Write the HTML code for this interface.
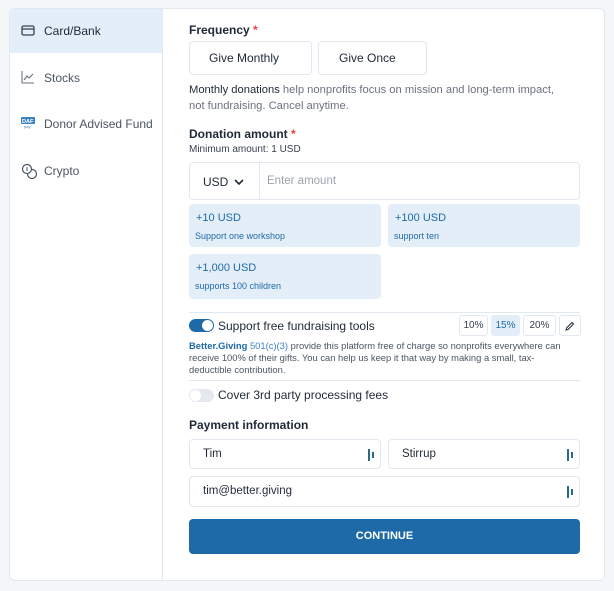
<!DOCTYPE html>
<html><head><meta charset="utf-8"><style>
*{box-sizing:border-box;margin:0;padding:0}
body{width:614px;height:591px;background:#f4f6f8;font-family:"Liberation Sans",sans-serif;color:#1f2937;position:relative;overflow:hidden}
.card{position:absolute;left:9px;top:8px;width:596px;height:573px;background:#fff;border:1px solid #e2e8f0;border-radius:6px;overflow:hidden}
.side{position:absolute;left:0;top:0;width:153px;height:100%;border-right:1px solid #e2e8f0}
.it{position:absolute;left:0;width:152px;height:44px;font-size:12px;color:#4b5563;display:flex;align-items:center;padding-left:34px}
.it.sel{background:#e3eef8;color:#1f2937}
.ic{position:absolute;left:11px;top:14px}
.a{position:absolute}
.t{font-size:12px}
.box{position:absolute;border:1px solid #e2e8f0;border-radius:4px;background:#fff}
.chip{position:absolute;background:#e3eef8;border-radius:4px;color:#1e6aa8}
.chip b{position:absolute;left:7px;top:8px;font-weight:normal;font-size:11px}
.chip i{position:absolute;left:6px;top:27px;font-style:normal;font-size:9px}
.pb{position:absolute;top:315px;height:21px;border:1px solid #e2e8f0;border-radius:3px;font-size:10px;text-align:center;line-height:19px;color:#374151}
.fi{position:absolute;right:6px;top:9px;width:6px;height:12px}
.fi::before{content:"";position:absolute;left:0;top:0;width:2px;height:12px;background:#2a6a8a}
.fi::after{content:"";position:absolute;left:4px;top:3px;width:2px;height:6px;background:#2a6a8a}
</style></head><body>
<div class="card">
 <div class="side">
  <div class="it sel" style="top:0"><svg class="ic" width="14" height="14" viewBox="0 0 14 14"><rect x="1" y="3" width="12" height="9" rx="1.5" fill="none" stroke="#374151" stroke-width="1.3"/><line x1="1" y1="6" x2="13" y2="6" stroke="#374151" stroke-width="1.3"/></svg>Card/Bank</div>
  <div class="it" style="top:47px"><svg class="ic" width="14" height="14" viewBox="0 0 14 14"><path d="M1 1V13H13M3 10L6 6L8 8L12 4" fill="none" stroke="#6b7280" stroke-width="1.1"/></svg>Stocks</div>
  <div class="it" style="top:93px"><svg class="ic" width="14" height="14" viewBox="0 0 14 14"><rect x="0" y="1" width="14" height="7" rx="1" fill="#3b82c4"/><text x="1" y="7" font-size="5.5" fill="#fff" font-family="Liberation Sans" font-weight="bold">DAF</text><text x="3" y="12" font-size="4" fill="#3b82c4" font-family="Liberation Sans">pay</text></svg>Donor Advised Fund</div>
  <div class="it" style="top:140px"><svg class="ic" width="16" height="16" viewBox="0 0 16 16"><circle cx="6" cy="6" r="4.5" fill="none" stroke="#4b5563" stroke-width="1.2"/><path d="M11 6.5A4.5 4.5 0 1 1 6.5 11" fill="none" stroke="#4b5563" stroke-width="1.2"/><line x1="6" y1="4" x2="6" y2="8" stroke="#4b5563"/></svg>Crypto</div>
 </div>
</div>
<div class="a t" style="left:189px;top:23px;font-weight:bold;color:#1f2937">Frequency <span style="color:#e53e3e">*</span></div>
<div class="box" style="left:189px;top:41px;width:123px;height:34px;font-size:12px;line-height:32px;padding-left:19px">Give Monthly</div>
<div class="box" style="left:318px;top:41px;width:109px;height:34px;font-size:12px;line-height:32px;padding-left:20px">Give Once</div>
<div class="a" style="left:189px;top:82px;width:395px;font-size:11.2px;line-height:16px;color:#6b7280"><span style="color:#1f2937">Monthly donations</span> help nonprofits focus on mission and long-term impact,<br>not fundraising. Cancel anytime.</div>
<div class="a t" style="left:189px;top:127px;font-weight:bold">Donation amount <span style="color:#e53e3e">*</span></div>
<div class="a" style="left:189px;top:144px;font-size:10px;color:#374151">Minimum amount: 1 USD</div>
<div class="box" style="left:189px;top:162px;width:391px;height:38px">
 <div class="a" style="left:13px;top:12px;font-size:12px">USD</div>
 <svg class="a" style="left:43px;top:14px" width="12" height="10" viewBox="0 0 12 10"><path d="M2 3L6 7L10 3" fill="none" stroke="#1f2937" stroke-width="1.6"/></svg>
 <div class="a" style="left:69px;top:0;width:1px;height:36px;background:#e2e8f0"></div>
 <div class="a" style="left:77px;top:12px;font-size:11.5px;color:#9ca3af">Enter amount</div>
</div>
<div class="chip" style="left:189px;top:204px;width:192px;height:43px"><b>+10 USD</b><i>Support one workshop</i></div>
<div class="chip" style="left:388px;top:204px;width:192px;height:43px"><b>+100 USD</b><i>support ten</i></div>
<div class="chip" style="left:189px;top:254px;width:192px;height:45px"><b>+1,000 USD</b><i>supports 100 children</i></div>
<div class="a" style="left:189px;top:312px;width:391px;height:1px;background:#e2e8f0"></div>
<div class="a" style="left:189px;top:319px;width:25px;height:13px;border-radius:7px;background:#1e6aa8"><div class="a" style="left:13px;top:1px;width:11px;height:11px;border-radius:50%;background:#fff"></div></div>
<div class="a t" style="left:218px;top:319px;color:#1f2937">Support free fundraising tools</div>
<div class="pb" style="left:459px;width:29px">10%</div>
<div class="pb" style="left:491px;width:29px;background:#e3eef8;border-color:#e3eef8;color:#1e6aa8">15%</div>
<div class="pb" style="left:523px;width:33px">20%</div>
<div class="pb" style="left:559px;width:22px"><svg width="10" height="10" viewBox="0 0 10 10" style="margin-top:5px"><path d="M1 9L1.5 7L7 1.5L8.5 3L3 8.5Z" fill="none" stroke="#1f2937"/></svg></div>
<div class="a" style="left:189px;top:340px;width:396px;font-size:9.4px;line-height:12px;color:#4b5563"><b style="color:#1e6aa8">Better.Giving</b> <span style="color:#3b82c4">501(c)(3)</span> provide this platform free of charge so nonprofits everywhere can<br>receive 100% of their gifts. You can help us keep it that way by making a small, tax-<br>deductible contribution.</div>
<div class="a" style="left:189px;top:380px;width:391px;height:1px;background:#e2e8f0"></div>
<div class="a" style="left:189px;top:389px;width:25px;height:13px;border-radius:7px;background:#e5e9ef"><div class="a" style="left:1px;top:1px;width:11px;height:11px;border-radius:50%;background:#fff"></div></div>
<div class="a t" style="left:218px;top:388px">Cover 3rd party processing fees</div>
<div class="a t" style="left:189px;top:418px;font-weight:bold">Payment information</div>
<div class="box" style="left:189px;top:439px;width:192px;height:30px;font-size:11.5px;line-height:28px;padding-left:13px">Tim<span class="fi"></span></div>
<div class="box" style="left:388px;top:439px;width:192px;height:30px;font-size:11.5px;line-height:28px;padding-left:13px">Stirrup<span class="fi"></span></div>
<div class="box" style="left:189px;top:476px;width:391px;height:31px;font-size:11.5px;line-height:29px;padding-left:13px">tim@better.giving<span class="fi"></span></div>
<div class="a" style="left:189px;top:519px;width:391px;height:35px;background:#1e6aa8;border-radius:4px;color:#fff;font-weight:bold;font-size:11px;text-align:center;line-height:35px">CONTINUE</div>
</body></html>
